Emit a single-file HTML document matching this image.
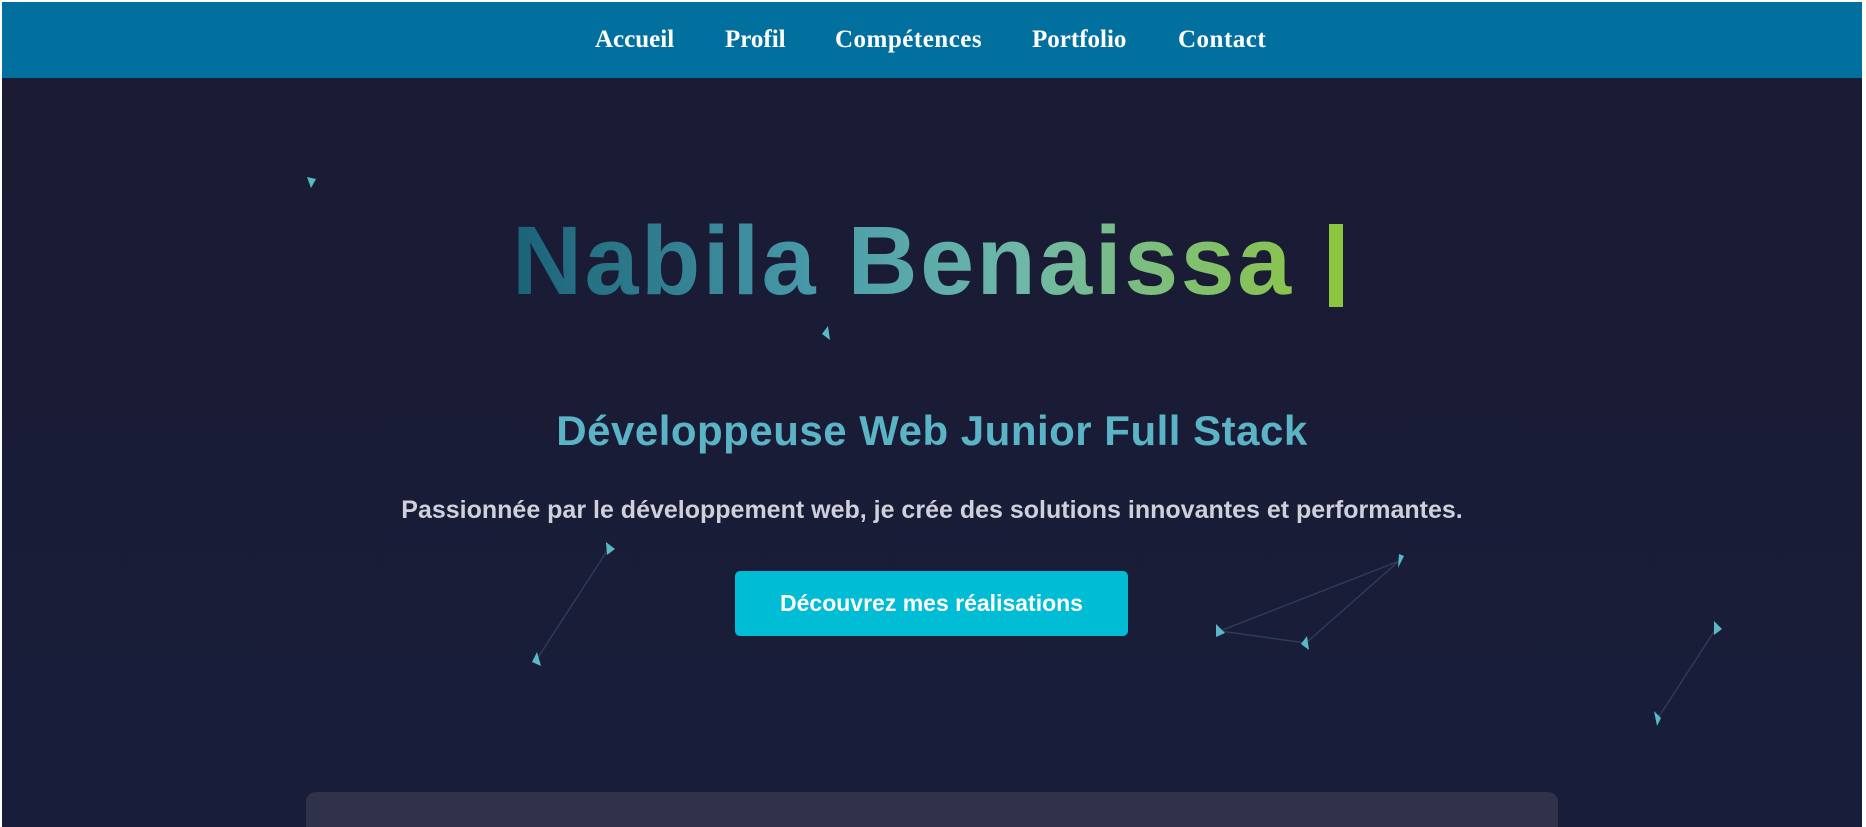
<!DOCTYPE html>
<html><head><meta charset="utf-8"><style>
html,body{margin:0;padding:0;width:1866px;height:827px;overflow:hidden;background:#fff}
#wrap{position:absolute;left:2px;top:2px;width:1860px;height:825px;background:linear-gradient(180deg,#1b1c33 0%,#181d3a 100%);overflow:hidden}
nav{position:absolute;left:0;top:0;width:1860px;height:76px;background:#02709f;text-align:center;font-family:"Liberation Serif",serif;font-weight:bold;font-size:25px;color:#fff}
nav span{position:absolute;top:24px}
h1{position:absolute;left:510px;top:204px;margin:0;white-space:nowrap;font-family:"Liberation Sans",sans-serif;font-weight:bold;font-size:97px;letter-spacing:2.5px;line-height:110px}
h1 .g{background:linear-gradient(90deg,#1b6278 0%,#4a9cab 40%,#6fb8a8 65%,#8ac44e 100%);-webkit-background-clip:text;background-clip:text;color:transparent;text-shadow:none}
.cur{position:absolute;left:1327px;top:222px;width:14px;height:83px;background:#8cc63f}
h2{position:absolute;left:0;width:1860px;top:403px;margin:0;text-align:center;font-family:"Liberation Sans",sans-serif;font-weight:bold;font-size:42px;letter-spacing:0.5px;color:#5bb4c6;line-height:52px}
p{position:absolute;left:0;width:1860px;top:494px;margin:0;text-align:center;font-family:"Liberation Sans",sans-serif;font-weight:bold;font-size:25px;color:#cfd0da}
.btn{position:absolute;left:733px;top:569px;width:393px;height:65px;background:#00bcd4;border-radius:5px;color:#fff;font-family:"Liberation Sans",sans-serif;font-weight:bold;font-size:23px;line-height:65px;text-align:center}
.card{position:absolute;left:304px;top:790px;width:1252px;height:60px;background:#2f3249;border-radius:10px}
svg{position:absolute;left:0;top:0}
</style></head><body><div id="wrap">
<nav><span style="left:593px">Accueil</span><span style="left:723px">Profil</span><span style="left:833px;letter-spacing:0.5px">Compétences</span><span style="left:1030px">Portfolio</span><span style="left:1176px;letter-spacing:0.5px">Contact</span></nav>
<svg width="1860" height="825">
<g stroke="#2d3a5a" stroke-width="1.5" fill="none">
<line x1="607" y1="546" x2="535" y2="657"/>
<line x1="1397" y1="559" x2="1218" y2="629"/>
<line x1="1397" y1="559" x2="1304" y2="641"/>
<line x1="1218" y1="629" x2="1304" y2="641"/>
<line x1="1715" y1="625" x2="1656" y2="716"/>
</g>
<g fill="#5ab8c9">
<polygon points="305,175 314,177 309,186"/>
<polygon points="826,324 828,338 820,332"/>
<polygon points="604,540 613,547 605,553"/>
<polygon points="535,650 539,664 530,660"/>
<polygon points="1397,552 1402,554 1396,566"/>
<polygon points="1214,622 1223,631 1214,635"/>
<polygon points="1305,634 1307,648 1299,642"/>
<polygon points="1712,619 1720,627 1712,633"/>
<polygon points="1652,709 1659,716 1655,724"/>
</g></svg>
<h1><span class="g">Nabila Benaissa</span></h1>
<div class="cur"></div>
<h2>Développeuse Web Junior Full Stack</h2>
<p>Passionnée par le développement web, je crée des solutions innovantes et performantes.</p>
<div class="btn">Découvrez mes réalisations</div>
<div class="card"></div>
</div></body></html>
